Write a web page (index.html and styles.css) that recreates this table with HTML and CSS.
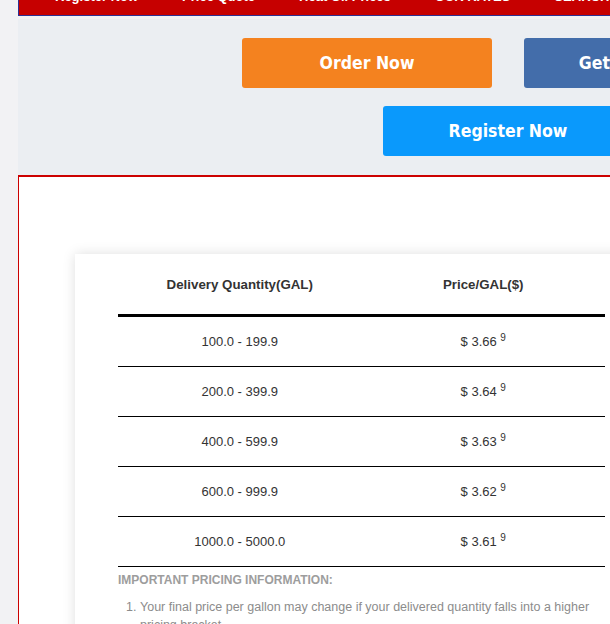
FILE: index.html
```html
<!DOCTYPE html>
<html lang="en">
<head>
<meta charset="utf-8">
<title>Pricing</title>
<link rel="stylesheet" href="styles.css">
</head>
<body>
<div class="page">
  <nav class="topnav">
    <a href="#">Register Now</a>
    <a href="#">Price Quote</a>
    <a href="#">Heat Oil Prices</a>
    <a href="#">OUR RATES</a>
    <a href="#">SEARCH</a>
  </nav>
  <section class="actions">
    <div class="btn-row">
      <a class="btn btn-order" href="#">Order Now</a>
      <a class="btn btn-quote" href="#">Get Price Quote</a>
    </div>
    <div class="btn-row">
      <a class="btn btn-register" href="#">Register Now</a>
    </div>
  </section>
  <section class="pricing">
    <div class="card">
      <div class="ptable">
        <div class="prow phead"><div>Delivery Quantity(GAL)</div><div>Price/GAL($)</div></div>
        <div class="prow"><div>100.0 - 199.9</div><div>$ 3.66 <sup>9</sup></div></div>
        <div class="prow"><div>200.0 - 399.9</div><div>$ 3.64 <sup>9</sup></div></div>
        <div class="prow"><div>400.0 - 599.9</div><div>$ 3.63 <sup>9</sup></div></div>
        <div class="prow"><div>600.0 - 999.9</div><div>$ 3.62 <sup>9</sup></div></div>
        <div class="prow"><div>1000.0 - 5000.0</div><div>$ 3.61 <sup>9</sup></div></div>
      </div>
      <p class="note-title">IMPORTANT PRICING INFORMATION:</p>
      <ol class="notes">
        <li>Your final price per gallon may change if your delivered quantity falls into a higher pricing bracket.</li>
        <li>Prices are subject to change without notice.</li>
      </ol>
    </div>
  </section>
</div>
</body>
</html>
```
FILE: styles.css
```css
html, body {
  margin: 0;
  padding: 0;
  overflow: hidden;
  background: #f2f2f4;
  font-family: "Liberation Sans", Arial, sans-serif;
}

.page {
  width: 980px;
  margin: -18px 0 0 18px;
}

.topnav {
  display: flex;
  gap: 44px;
  height: 33px;
  line-height: 30px;
  padding-left: 36px;
  background: #c60000;
  border-left: 1px solid #2e3192;
  border-bottom: 1px solid #2e3192;
  overflow: hidden;
}

.topnav a {
  color: #fff;
  font-weight: bold;
  font-size: 13px;
  text-decoration: none;
  white-space: nowrap;
}

.actions {
  margin-top: 3px;
  background: #ebeef2;
  padding: 19px 0;
  display: flex;
  flex-direction: column;
  align-items: center;
  gap: 18px;
}

.btn-row {
  display: flex;
  gap: 32px;
  justify-content: center;
}

.btn {
  width: 250px;
  height: 50px;
  border-radius: 3px;
  display: flex;
  align-items: center;
  justify-content: center;
  color: #fff;
  text-decoration: none;
  font-family: "DejaVu Sans Condensed", "DejaVu Sans", sans-serif;
  font-stretch: condensed;
  font-weight: bold;
  font-size: 17.5px;
  white-space: nowrap;
}

.btn-order { background: #f4821f; }
.btn-quote { background: #436daa; }
.btn-register { background: #0a99fc; }

.pricing {
  border-top: 2px solid #cc0000;
  border-left: 1px solid #cc0000;
  background: #fff;
  padding: 77px 0 0 56px;
  min-height: 700px;
}

.card {
  width: 487px;
  padding: 0 43px 24px;
  background: #fff;
  box-shadow: 0 0 12px rgba(0, 0, 0, 0.13);
}

.prow {
  display: grid;
  grid-template-columns: 1fr 1fr;
  align-items: center;
  text-align: center;
  height: 49px;
  border-bottom: 1px solid #000;
  font-size: 13px;
  color: #333;
}

.phead {
  height: 60px;
  border-bottom: 3px solid #000;
  font-weight: bold;
  font-size: 13.3px;
}

.prow sup {
  font-size: 10px;
  line-height: 0;
}

.note-title {
  margin: 6px 0 0;
  line-height: 14px;
  font-size: 12px;
  font-weight: bold;
  color: #9d9d9d;
}

.notes {
  margin: 11px 0 0;
  padding-left: 22px;
  font-size: 12.5px;
  line-height: 18px;
  color: #8c8c8c;
}
```
